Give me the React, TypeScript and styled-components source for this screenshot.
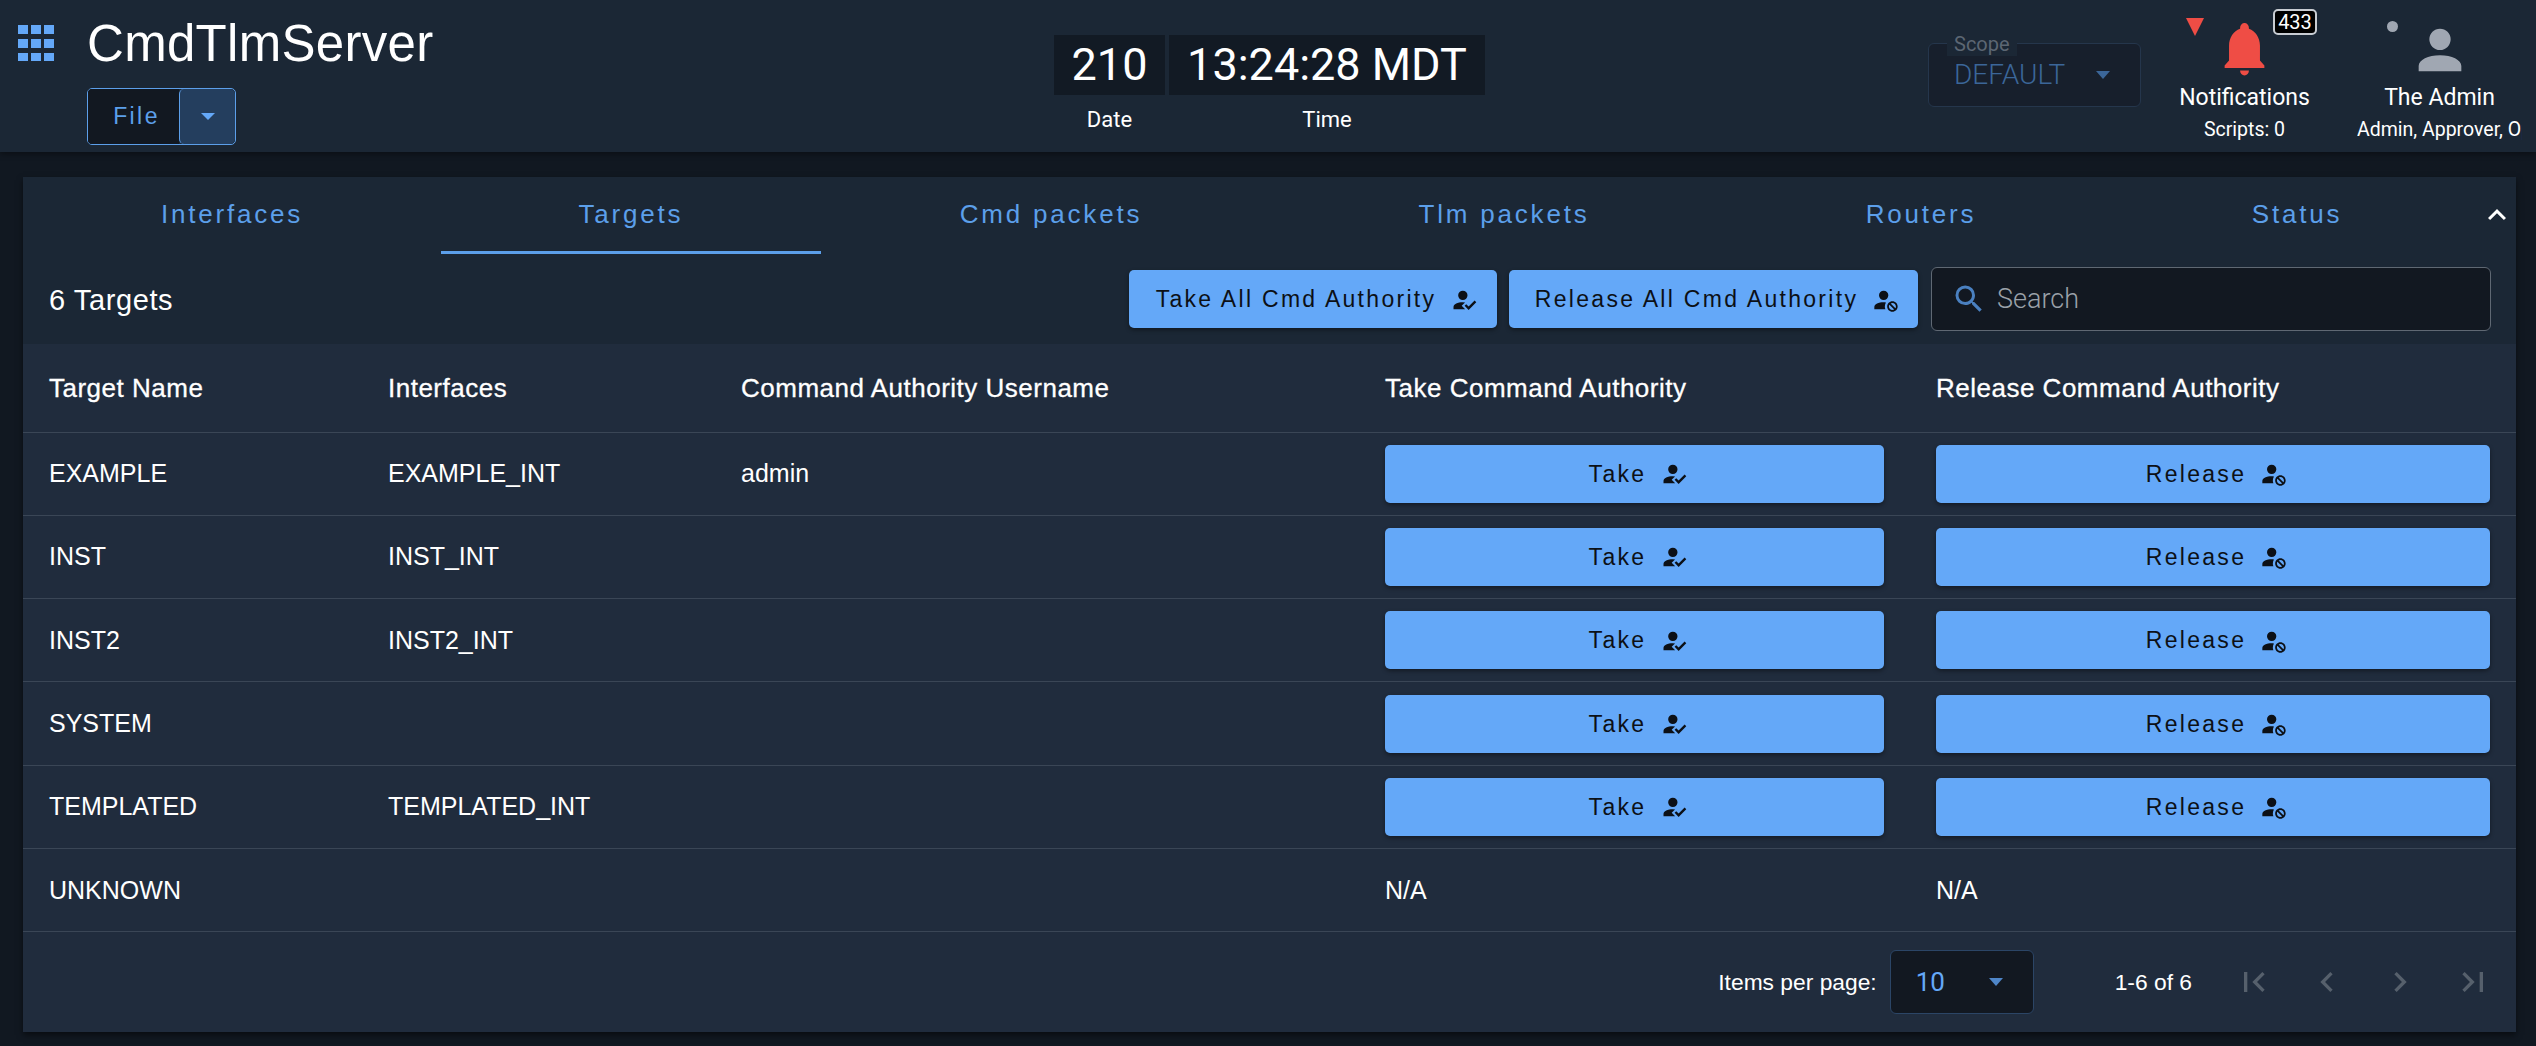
import styled, { createGlobalStyle } from 'styled-components';

const GlobalStyle = createGlobalStyle`
  html, body {
    margin: 0;
    height: 100%;
    background: #111821;
    overflow: hidden;
  }
  * {
    box-sizing: border-box;
  }
`;

const Page = styled.div`
  width: 2536px;
  height: 1046px;
  background: #111821;
  color: #fff;
  font-family: 'Liberation Sans', Arial, sans-serif;
`;

const Header = styled.header`
  display: flex;
  height: 152px;
  background: #1b2735;
  box-shadow: 0 2px 6px rgba(0, 0, 0, 0.4);
`;

const LeftBlock = styled.div`
  display: flex;
  width: 1054px;
  padding: 25px 0 0 18px;
`;

const AppsIcon = styled.svg`
  width: 36px;
  height: 36px;
  fill: #64a8f8;
  margin-right: 33px;
`;

const TitleColumn = styled.div`
  display: flex;
  flex-direction: column;
  align-items: flex-start;
`;

const AppTitle = styled.div`
  font-size: 51px;
  line-height: 38px;
  height: 63px;
  letter-spacing: 0.3px;
`;

const SplitButton = styled.div`
  display: flex;
  width: 149px;
  height: 57px;
  border: 1px solid #5c9fea;
  border-radius: 5px;
  overflow: hidden;
`;

const FileLabel = styled.div`
  width: 91px;
  display: flex;
  align-items: center;
  justify-content: center;
  padding-left: 6px;
  background: #121821;
  color: #5c9fea;
  font-size: 23px;
  letter-spacing: 2.4px;
`;

const FileArrow = styled.div`
  flex: 1;
  display: flex;
  align-items: center;
  justify-content: center;
  background: #243e5e;
  border: 1px solid #5c9fea;
  border-width: 0 0 0 1px;
  border-radius: 5px;
`;

const Triangle = styled.div<{ $color: string; $w: number; $h: number }>`
  width: 0;
  height: 0;
  border-left: ${(p) => p.$w / 2}px solid transparent;
  border-right: ${(p) => p.$w / 2}px solid transparent;
  border-top: ${(p) => p.$h}px solid ${(p) => p.$color};
`;

const Clock = styled.div`
  display: flex;
  gap: 4px;
  width: 431px;
  padding-top: 35px;
  font-family: Roboto, sans-serif;
`;

const ClockCell = styled.div<{ $width: number }>`
  width: ${(p) => p.$width}px;
  text-align: center;
`;

const ClockValue = styled.div`
  height: 60px;
  line-height: 60px;
  background: #121a24;
  font-size: 45px;
`;

const ClockLabel = styled.div`
  margin-top: 11px;
  font-size: 22px;
  line-height: 28px;
  font-weight: 400;
`;

const RightBlock = styled.div`
  display: flex;
  flex: 1;
  min-width: 0;
  padding-left: 443px;
  font-family: Roboto, sans-serif;
`;

const ScopeBox = styled.div`
  position: relative;
  width: 213px;
  height: 64px;
  margin-top: 43px;
  padding-left: 25px;
  display: flex;
  align-items: center;
  gap: 25px;
  background: #171f2c;
  border: 1px solid #25364c;
  border-radius: 6px;
`;

const ScopeLegend = styled.span`
  position: absolute;
  top: -12px;
  left: 18px;
  padding: 0 7px;
  background: #1b2735;
  color: #5c6673;
  font-size: 20px;
  line-height: 24px;
`;

const ScopeValue = styled.span`
  color: #3b6699;
  font-size: 28px;
  font-weight: 300;
  line-height: 34px;
  width: 117px;
`;

const StatusColumn = styled.div<{ $width: number; $left: number }>`
  position: relative;
  width: ${(p) => p.$width}px;
  margin-left: ${(p) => p.$left}px;
  padding-top: 18px;
  text-align: center;
  white-space: nowrap;
  overflow: hidden;
`;

const IconSlot = styled.div`
  display: flex;
  justify-content: center;
  height: 64px;
`;

const StatusIcon = styled.svg<{ $color: string; $w: number; $h: number }>`
  display: block;
  width: ${(p) => p.$w}px;
  height: ${(p) => p.$h}px;
  fill: ${(p) => p.$color};
`;

const StatusName = styled.div`
  font-size: 23px;
  line-height: 28px;
  margin-top: 2px;
`;

const StatusDetail = styled.div`
  margin-top: 6px;
  font-size: 19.5px;
  line-height: 24px;
`;

const AlertMark = styled.div`
  position: absolute;
  top: 18px;
  left: 14px;
`;

const CountBadge = styled.div`
  position: absolute;
  top: 9px;
  right: 0;
  width: 44px;
  height: 26px;
  line-height: 22px;
  border: 2px solid #c8ccd2;
  border-radius: 5px;
  background: #000;
  font-size: 20px;
`;

const PresenceDot = styled.div`
  position: absolute;
  top: 21px;
  left: 30px;
  width: 11px;
  height: 11px;
  border-radius: 50%;
  background: #a0a7b2;
`;

const Card = styled.main`
  margin: 25px 20px 0 23px;
  height: 855px;
  background: #1b2735;
  box-shadow: 0 3px 6px rgba(0, 0, 0, 0.5);
`;

const TabBar = styled.nav`
  display: grid;
  grid-template-columns: 418px 380px 460px 446px 388px 364px 37px;
  height: 77px;
`;

const Tab = styled.div<{ $active?: boolean }>`
  display: flex;
  align-items: center;
  justify-content: center;
  color: #5c9fea;
  font-size: 26px;
  letter-spacing: 2.8px;
  border-bottom: 3px solid ${(p) => (p.$active ? '#5c9fea' : 'transparent')};
`;

const TabChevron = styled.svg`
  width: 36px;
  height: 36px;
  fill: #fff;
  align-self: center;
  margin-top: -1px;
`;

const Toolbar = styled.div`
  display: flex;
  align-items: center;
  height: 90px;
  padding: 0 26px;
`;

const Count = styled.div`
  flex: 1;
  padding-top: 2px;
  font-size: 29px;
  letter-spacing: 0.6px;
`;

const ActionButton = styled.button<{ $width?: number }>`
  display: flex;
  align-items: center;
  justify-content: center;
  gap: 14px;
  width: ${(p) => (p.$width ? `${p.$width}px` : '100%')};
  height: 58px;
  padding: 1px 0 0 8px;
  border: none;
  border-radius: 5px;
  background: #64a8f8;
  color: #0c1016;
  font-family: 'Liberation Sans', Arial, sans-serif;
  font-size: 23px;
  letter-spacing: 2.3px;
  box-shadow: 0 2px 4px rgba(0, 0, 0, 0.4);
`;

const ToolbarAction = styled(ActionButton)`
  margin-right: 12px;
`;

const ButtonIcon = styled.svg`
  width: 28px;
  height: 28px;
  fill: #0c1016;
  flex: none;
`;

const SearchBox = styled.div`
  display: flex;
  align-items: center;
  width: 560px;
  height: 64px;
  margin: -1px -1px 0 1px;
  padding-left: 19px;
  background: #121821;
  border: 1px solid #5f6873;
  border-radius: 6px;
  color: #9aa1a9;
  font-family: Roboto, sans-serif;
  font-size: 27px;
  font-weight: 300;
`;

const SearchIcon = styled.svg`
  width: 36px;
  height: 36px;
  fill: #4a80c0;
  margin-right: 10px;
`;

const Table = styled.table`
  width: 100%;
  table-layout: fixed;
  border-collapse: collapse;
  background: #202c3d;
`;

const HeadCell = styled.th`
  height: 88px;
  padding: 2px 26px 0;
  text-align: left;
  font-size: 26px;
  font-weight: 400;
  letter-spacing: 0.5px;
  border-bottom: 1px solid #3a4656;
  -webkit-text-stroke: 0.3px #fff;
`;

const Cell = styled.td`
  height: 83.33px;
  padding: 0 26px;
  font-size: 25px;
  border-bottom: 1px solid #3a4656;
`;

const Footer = styled.div`
  display: flex;
  align-items: center;
  height: 100px;
  padding: 0 7px 0 0;
  justify-content: flex-end;
  background: #202c3d;
  font-size: 22.8px;
`;

const PageSizeSelect = styled.div`
  display: flex;
  align-items: center;
  justify-content: space-between;
  width: 144px;
  height: 64px;
  margin: 0 81px 0 13px;
  padding: 0 30px 0 25px;
  background: #121821;
  border: 1px solid #2b4566;
  border-radius: 6px;
  color: #64a8f8;
  font-family: Roboto, sans-serif;
  font-size: 26px;
`;

const PageRange = styled.div`
  margin-right: 25px;
`;

const PagerButton = styled.div`
  width: 73px;
  display: flex;
  justify-content: center;
`;

const PagerIcon = styled.svg`
  width: 40px;
  height: 40px;
  fill: #56606c;
`;

const paths = {
  bell: 'M21,19V20H3V19L5,17V11C5,7.9 7.03,5.17 10,4.29C10,4.19 10,4.1 10,4A2,2 0 0,1 12,2A2,2 0 0,1 14,4C14,4.1 14,4.19 14,4.29C16.97,5.17 19,7.9 19,11V17L21,19M14,21A2,2 0 0,1 12,23A2,2 0 0,1 10,21',
  account: 'M12,4A4,4 0 0,1 16,8A4,4 0 0,1 12,12A4,4 0 0,1 8,8A4,4 0 0,1 12,4M12,14C16.42,14 20,15.79 20,18V20H4V18C4,15.79 7.58,14 12,14Z',
  take: 'M21.1,12.5L22.5,13.91L15.97,20.5L12.5,17L13.9,15.59L15.97,17.67L21.1,12.5M10,17L13,20H3V18C3,15.79 6.58,14 11,14L12.89,14.09L10,17M11,4A4,4 0 0,1 15,8A4,4 0 0,1 11,12A4,4 0 0,1 7,8A4,4 0 0,1 11,4Z',
  release: 'M10 4A4 4 0 0 0 6 8A4 4 0 0 0 10 12A4 4 0 0 0 14 8A4 4 0 0 0 10 4M17.5 13C15 13 13 15 13 17.5C13 20 15 22 17.5 22C20 22 22 20 22 17.5C22 15 20 13 17.5 13M10 14C5.58 14 2 15.79 2 18V20H11.5A6.5 6.5 0 0 1 11 17.5A6.5 6.5 0 0 1 11.95 14.14C11.32 14.06 10.68 14 10 14M17.5 14.5C19.16 14.5 20.5 15.84 20.5 17.5C20.5 18.06 20.35 18.58 20.08 19L16 14.92C16.42 14.65 16.94 14.5 17.5 14.5M14.92 16L19 20.08C18.58 20.35 18.06 20.5 17.5 20.5C15.84 20.5 14.5 19.16 14.5 17.5C14.5 16.94 14.65 16.42 14.92 16Z',
  search: 'M9.5,3A6.5,6.5 0 0,1 16,9.5C16,11.11 15.41,12.59 14.44,13.73L14.71,14H15.5L20.5,19L19,20.5L14,15.5V14.71L13.73,14.44C12.59,15.41 11.11,16 9.5,16A6.5,6.5 0 0,1 3,9.5A6.5,6.5 0 0,1 9.5,3M9.5,5C7,5 5,7 5,9.5C5,12 7,14 9.5,14C12,14 14,12 14,9.5C14,7 12,5 9.5,5Z',
  up: 'M7.41,15.41L12,10.83L16.59,15.41L18,14L12,8L6,14L7.41,15.41Z',
  first: 'M18.41,16.59L13.82,12L18.41,7.41L17,6L11,12L17,18L18.41,16.59M6,6H8V18H6V6Z',
  prev: 'M15.41,16.58L10.83,12L15.41,7.41L14,6L8,12L14,18L15.41,16.58Z',
  next: 'M8.59,16.58L13.17,12L8.59,7.41L10,6L16,12L10,18L8.59,16.58Z',
  last: 'M5.59,7.41L10.18,12L5.59,16.59L7,18L13,12L7,6L5.59,7.41M16,6H18V18H16V6Z',
};

const tabs = ['Interfaces', 'Targets', 'Cmd packets', 'Tlm packets', 'Routers', 'Status'];
const columns = [339, 353, 644, 551, 606];
const targets = [
  { name: 'EXAMPLE', iface: 'EXAMPLE_INT', user: 'admin', actions: true },
  { name: 'INST', iface: 'INST_INT', user: '', actions: true },
  { name: 'INST2', iface: 'INST2_INT', user: '', actions: true },
  { name: 'SYSTEM', iface: '', user: '', actions: true },
  { name: 'TEMPLATED', iface: 'TEMPLATED_INT', user: '', actions: true },
  { name: 'UNKNOWN', iface: '', user: '', actions: false },
];

function TakeIcon() {
  return (
    <ButtonIcon viewBox="0 0 24 24">
      <path d={paths.take} />
    </ButtonIcon>
  );
}

function ReleaseIcon() {
  return (
    <ButtonIcon viewBox="0 0 24 24">
      <path d={paths.release} />
    </ButtonIcon>
  );
}

export default function App() {
  return (
    <Page>
      <GlobalStyle />
      <Header>
        <LeftBlock>
          <AppsIcon viewBox="0 0 36 36">
            {[0, 14, 28].map((y) =>
              [0, 13, 26].map((x) => <rect key={`${x}-${y}`} x={x} y={y} width="10" height="9" />)
            )}
          </AppsIcon>
          <TitleColumn>
            <AppTitle>CmdTlmServer</AppTitle>
            <SplitButton>
              <FileLabel>File</FileLabel>
              <FileArrow>
                <Triangle $color="#64a8f8" $w={14} $h={7} />
              </FileArrow>
            </SplitButton>
          </TitleColumn>
        </LeftBlock>
        <Clock>
          <ClockCell $width={111}>
            <ClockValue>210</ClockValue>
            <ClockLabel>Date</ClockLabel>
          </ClockCell>
          <ClockCell $width={316}>
            <ClockValue>13:24:28 MDT</ClockValue>
            <ClockLabel>Time</ClockLabel>
          </ClockCell>
        </Clock>
        <RightBlock>
          <ScopeBox>
            <ScopeLegend>Scope</ScopeLegend>
            <ScopeValue>DEFAULT</ScopeValue>
            <Triangle $color="#3b6699" $w={15} $h={8} />
          </ScopeBox>
          <StatusColumn $width={145} $left={31}>
            <AlertMark>
              <Triangle $color="#ef4d45" $w={19} $h={18} />
            </AlertMark>
            <IconSlot>
              <StatusIcon $color="#ef4d45" $w={53} $h={60} viewBox="0 0 24 24" preserveAspectRatio="none">
                <path d={paths.bell} />
              </StatusIcon>
            </IconSlot>
            <CountBadge>433</CountBadge>
            <StatusName>Notifications</StatusName>
            <StatusDetail>Scripts: 0</StatusDetail>
          </StatusColumn>
          <StatusColumn $width={165} $left={40}>
            <PresenceDot />
            <IconSlot>
              <StatusIcon $color="#a0a7b2" $w={64} $h={64} viewBox="0 0 24 24">
                <path d={paths.account} />
              </StatusIcon>
            </IconSlot>
            <StatusName>The Admin</StatusName>
            <StatusDetail>Admin, Approver, Operator</StatusDetail>
          </StatusColumn>
        </RightBlock>
      </Header>
      <Card>
        <TabBar>
          {tabs.map((tab) => (
            <Tab key={tab} $active={tab === 'Targets'}>
              {tab}
            </Tab>
          ))}
          <TabChevron viewBox="0 0 24 24">
            <path d={paths.up} />
          </TabChevron>
        </TabBar>
        <Toolbar>
          <Count>6 Targets</Count>
          <ToolbarAction $width={368}>
            Take All Cmd Authority
            <TakeIcon />
          </ToolbarAction>
          <ToolbarAction $width={409}>
            Release All Cmd Authority
            <ReleaseIcon />
          </ToolbarAction>
          <SearchBox>
            <SearchIcon viewBox="0 0 24 24">
              <path d={paths.search} />
            </SearchIcon>
            Search
          </SearchBox>
        </Toolbar>
        <Table>
          <colgroup>
            {columns.map((width) => (
              <col key={width} width={width} />
            ))}
          </colgroup>
          <thead>
            <tr>
              <HeadCell>Target Name</HeadCell>
              <HeadCell>Interfaces</HeadCell>
              <HeadCell>Command Authority Username</HeadCell>
              <HeadCell>Take Command Authority</HeadCell>
              <HeadCell>Release Command Authority</HeadCell>
            </tr>
          </thead>
          <tbody>
            {targets.map((target) => (
              <tr key={target.name}>
                <Cell>{target.name}</Cell>
                <Cell>{target.iface}</Cell>
                <Cell>{target.user}</Cell>
                <Cell>
                  {target.actions ? (
                    <ActionButton>
                      Take
                      <TakeIcon />
                    </ActionButton>
                  ) : (
                    'N/A'
                  )}
                </Cell>
                <Cell>
                  {target.actions ? (
                    <ActionButton>
                      Release
                      <ReleaseIcon />
                    </ActionButton>
                  ) : (
                    'N/A'
                  )}
                </Cell>
              </tr>
            ))}
          </tbody>
        </Table>
        <Footer>
          Items per page:
          <PageSizeSelect>
            10
            <Triangle $color="#4f86c9" $w={15} $h={8} />
          </PageSizeSelect>
          <PageRange>1-6 of 6</PageRange>
          {[paths.first, paths.prev, paths.next, paths.last].map((d) => (
            <PagerButton key={d}>
              <PagerIcon viewBox="0 0 24 24">
                <path d={d} />
              </PagerIcon>
            </PagerButton>
          ))}
        </Footer>
      </Card>
    </Page>
  );
}
